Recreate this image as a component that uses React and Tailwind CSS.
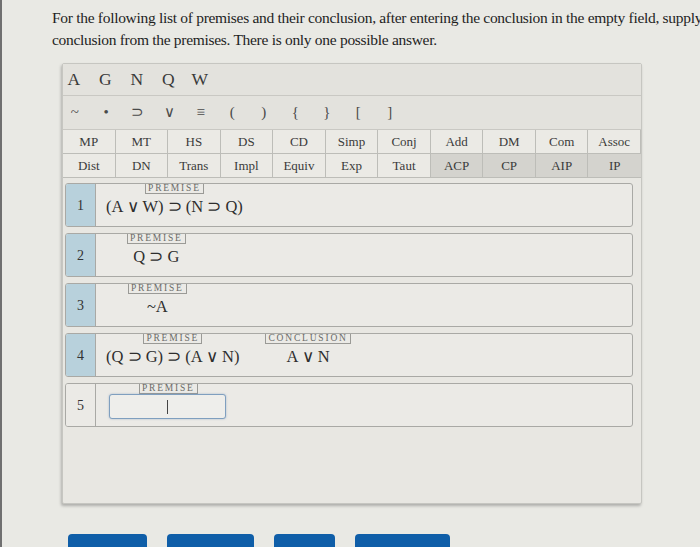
import React from 'react';

const letters = ['A', 'G', 'N', 'Q', 'W'];
const symbols = ['~', '•', '⊃', '∨', '≡', '(', ')', '{', '}', '[', ']'];
const rulesTop = ['MP', 'MT', 'HS', 'DS', 'CD', 'Simp', 'Conj', 'Add', 'DM', 'Com', 'Assoc'];
const rulesBottom = ['Dist', 'DN', 'Trans', 'Impl', 'Equiv', 'Exp', 'Taut', 'ACP', 'CP', 'AIP', 'IP'];
const darkRules = ['ACP', 'CP', 'AIP', 'IP'];

function Tag({ children }) {
  return (
    <div className="border border-t-0 border-[#9a9a96] px-[2px] text-[9.5px] leading-[9px] tracking-[1.8px] text-[#6a6a68]">
      {children}
    </div>
  );
}

function Line({ num, pad, children, blue = true }) {
  return (
    <div className="flex h-[44px] rounded-[3px] border border-[#a9a9a5] bg-[#ebeae6] overflow-hidden">
      <div
        className={`flex w-[30px] shrink-0 items-center justify-center border-r border-[#a9a9a5] text-[14px] text-[#333] ${
          blue ? 'bg-[#b8d1dc]' : 'bg-[#ebeae6]'
        }`}
      >
        {num}
      </div>
      <div className={`flex items-start ${pad}`}>{children}</div>
    </div>
  );
}

function Formula({ tag, text }) {
  return (
    <div className="flex flex-col items-center">
      <Tag>{tag}</Tag>
      <div className="mt-[4px] text-[16.5px] leading-[18px] text-[#2e2e2e] whitespace-nowrap">{text}</div>
    </div>
  );
}

export default function App() {
  return (
    <div className="relative h-[547px] w-[700px] overflow-hidden border-l-2 border-[#707070] bg-[#e9e9e4] font-['Liberation_Serif',serif]">
      <div className="pl-[50px] pt-[7px] text-[15.5px] leading-[22px] text-[#1e1e1e]">
        <div className="whitespace-nowrap tracking-[-0.3px]">
          For the following list of premises and their conclusion, after entering the conclusion in the empty field, supply
        </div>
        <div className="whitespace-nowrap tracking-[-0.3px]">conclusion from the premises. There is only one possible answer.</div>
      </div>

      <div className="ml-[60px] mt-[12px] h-[441px] w-[580px] rounded-[2px] border border-[#c6c6c1] bg-[#e8e7e2] shadow-[-1px_2px_3px_rgba(0,0,0,0.25)]">
        <div className="flex h-[32px] items-center gap-[14px] border-b border-[#c9c8c3] bg-[#e3e2dd] pl-[2px] text-[17.5px] text-[#3a3a3a]">
          {letters.map((l) => (
            <span key={l} className="w-[17.5px] text-center">
              {l}
            </span>
          ))}
        </div>
        <div className="flex h-[34px] items-center border-b border-[#c9c8c3] bg-[#e3e2dd] text-[15px] text-[#4a4a4a]">
          <div className="-ml-[4px] flex">
            {symbols.map((s) => (
              <span key={s} className="w-[31.5px] text-center">
                {s}
              </span>
            ))}
          </div>
        </div>
        <div className="grid grid-cols-11 border-b border-[#bdbdb8] text-[13px] text-[#3a3a3a]">
          {rulesTop.map((r) => (
            <div key={r} className="flex h-[24px] items-center justify-center border-r border-b border-[#bdbdb8] bg-[#ebeae5] last:border-r-0">
              {r}
            </div>
          ))}
          {rulesBottom.map((r) => (
            <div
              key={r}
              className={`flex h-[23px] items-center justify-center border-r border-[#bdbdb8] last:border-r-0 ${
                darkRules.includes(r) ? 'bg-[#d4d3ce]' : 'bg-[#ebeae5]'
              }`}
            >
              {r}
            </div>
          ))}
        </div>

        <div className="ml-[2px] mr-[8px] mt-[5px] flex flex-col gap-[6px]">
          <Line num="1" pad="pl-[10px]">
            <Formula tag="PREMISE" text="(A ∨ W) ⊃ (N ⊃ Q)" />
          </Line>
          <Line num="2" pad="pl-[31px]">
            <Formula tag="PREMISE" text="Q ⊃ G" />
          </Line>
          <Line num="3" pad="pl-[32px]">
            <Formula tag="PREMISE" text="~A" />
          </Line>
          <Line num="4" pad="pl-[10px] gap-[26px]">
            <Formula tag="PREMISE" text="(Q ⊃ G) ⊃ (A ∨ N)" />
            <Formula tag="CONCLUSION" text="A ∨ N" />
          </Line>
          <Line num="5" pad="pl-[13px]" blue={false}>
            <div className="flex flex-col items-center">
              <div className="ml-[30px] self-start">
                <Tag>PREMISE</Tag>
              </div>
              <div className="flex h-[25px] w-[117px] items-center justify-center rounded-[3px] border border-[#7f9fbf] bg-[#eeeeeb] shadow-[0_0_2px_rgba(90,130,180,0.5)]">
                <div className="h-[14px] w-[1px] bg-[#444]" />
              </div>
            </div>
          </Line>
        </div>
      </div>

      <div className="ml-[66px] mt-[30px] flex gap-[20px]">
        <div className="h-[20px] w-[79px] rounded-[4px] bg-[#0f5ea8]" />
        <div className="h-[20px] w-[87px] rounded-[4px] bg-[#0f5ea8]" />
        <div className="h-[20px] w-[61px] rounded-[4px] bg-[#0f5ea8]" />
        <div className="h-[20px] w-[95px] rounded-[4px] bg-[#0f5ea8]" />
      </div>
    </div>
  );
}
